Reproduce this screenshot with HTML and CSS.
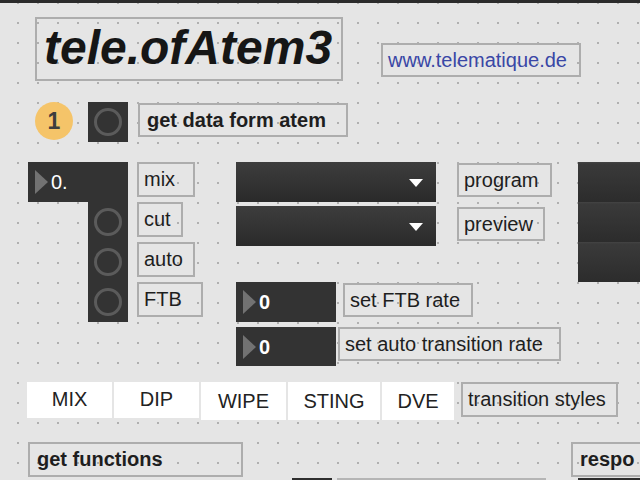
FILE: index.html
```html
<!DOCTYPE html>
<html lang="en">
<head>
  <meta charset="UTF-8">
  <title>tele.ofAtem3</title>
  <link rel="stylesheet" href="styles.css">
</head>
<body>
  <div class="topbar"></div>
  <div class="patch">
    <div class="row head">
      <div class="title">tele.ofAtem3</div>
      <div class="box url">www.telematique.de</div>
    </div>

    <div class="row start">
      <div class="step">1</div>
      <div class="bang"><span class="ring"></span></div>
      <div class="box bold getdata">get data form atem</div>
    </div>

    <div class="row controls">
      <div class="mixer">
        <div class="num wide"><span class="tri"></span>0.</div>
        <div class="bangs">
          <div class="bang"><span class="ring"></span></div>
          <div class="bang"><span class="ring"></span></div>
          <div class="bang"><span class="ring"></span></div>
        </div>
      </div>
      <div class="labels">
        <div class="box w58">mix</div>
        <div class="box w46">cut</div>
        <div class="box w58">auto</div>
        <div class="box w66">FTB</div>
      </div>
      <div class="routing">
        <div class="line">
          <div class="menu"><span class="arrow"></span></div>
          <div class="box tag w95">program</div>
        </div>
        <div class="line second">
          <div class="menu"><span class="arrow"></span></div>
          <div class="box tag w88">preview</div>
        </div>
        <div class="line rate">
          <div class="num"><span class="tri"></span><b>0</b></div>
          <div class="box ratelabel w130">set FTB rate</div>
        </div>
        <div class="line rate2">
          <div class="num short"><span class="tri"></span><b>0</b></div>
          <div class="box ratelabel near w223">set auto transition rate</div>
        </div>
      </div>
      <div class="side">
        <div class="seg"></div>
        <div class="seg"></div>
        <div class="seg"></div>
      </div>
    </div>

    <div class="row styles">
      <div class="tab">MIX</div>
      <div class="tab">DIP</div>
      <div class="tab low">WIPE</div>
      <div class="tab low sting">STING</div>
      <div class="tab low dve">DVE</div>
      <div class="box styleslabel">transition styles</div>
    </div>

    <div class="row funcs">
      <div class="box bold getfuncs">get functions</div>
      <div class="box bold respo">respo</div>
    </div>

    <div class="row tail">
      <div class="darkbit"></div>
      <div class="greybit"></div>
      <div class="darkbit wide"></div>
    </div>
  </div>
</body>
</html>
```

FILE: styles.css
```css
body {
  margin: 0;
  width: 640px;
  height: 480px;
  overflow: hidden;
  font-family: 'Liberation Sans', Arial, sans-serif;
  font-size: 20px;
  color: #1e1e1e;
  background-color: #e5e5e5;
  background-image: radial-gradient(circle, #b0b0b0 0.9px, rgba(0,0,0,0) 1.4px);
  background-size: 20px 20px;
  background-position: 8px -7px;
}
.topbar {
  height: 3px;
  background: #2b2b2b;
}
.patch {
  padding-left: 28px;
}
.row {
  display: flex;
  align-items: flex-start;
}
.box {
  box-sizing: border-box;
  height: 35px;
  border: 2px solid #adadad;
  padding-left: 5px;
  line-height: 30px;
  white-space: nowrap;
  overflow: hidden;
  flex-shrink: 0;
}
.bold {
  font-weight: bold;
}

/* header */
.head {
  margin-top: 14px;
}
.title {
  box-sizing: border-box;
  margin-left: 7px;
  width: 308px;
  height: 64px;
  border: 2px solid #adadad;
  padding-left: 7px;
  font-size: 48px;
  line-height: 58px;
  font-weight: bold;
  font-style: italic;
  color: #161616;
}
.url {
  margin-left: 38px;
  margin-top: 26px;
  width: 200px;
  height: 34px;
  color: #3947a6;
}

/* start row */
.start {
  margin-top: 21px;
}
.step {
  margin-left: 7px;
  width: 38px;
  height: 38px;
  border-radius: 50%;
  background: #f5c469;
  color: #3e3e3e;
  font-weight: bold;
  font-size: 23px;
  line-height: 39px;
  text-align: center;
}
.start .bang {
  margin-left: 15px;
}
.getdata {
  margin-left: 10px;
  margin-top: 1px;
  width: 210px;
  height: 34px;
  padding-left: 7px;
}
.bang {
  width: 40px;
  height: 40px;
  background: #333;
  display: flex;
  align-items: center;
  justify-content: center;
}
.ring {
  box-sizing: border-box;
  width: 28px;
  height: 28px;
  border: 3px solid #5b5b5b;
  border-radius: 50%;
}

/* controls */
.controls {
  margin-top: 20px;
}
.mixer {
  width: 100px;
  flex-shrink: 0;
}
.num {
  box-sizing: border-box;
  width: 100px;
  height: 40px;
  background: #333;
  color: #fff;
  display: flex;
  align-items: center;
  padding-left: 7px;
  line-height: 40px;
}
.num.short {
  height: 39px;
}
.tri {
  width: 0;
  height: 0;
  border-left: 13px solid #727272;
  border-top: 12px solid transparent;
  border-bottom: 12px solid transparent;
  margin-right: 3px;
}
.bangs {
  margin-left: 60px;
}
.labels {
  margin-left: 9px;
  width: 66px;
  display: flex;
  flex-direction: column;
  gap: 5px;
  flex-shrink: 0;
}
.w46 { width: 46px; }
.w58 { width: 58px; }
.w66 { width: 66px; }
.w88 { width: 88px; }
.w95 { width: 95px; }
.w130 { width: 130px; }
.w223 { width: 223px; }

.routing {
  margin-left: 33px;
  width: 325px;
  flex-shrink: 0;
}
.line {
  display: flex;
  align-items: flex-start;
}
.line.second {
  margin-top: 4px;
}
.line.rate {
  margin-top: 36px;
}
.line.rate2 {
  margin-top: 5px;
}
.menu {
  position: relative;
  width: 200px;
  height: 40px;
  background: linear-gradient(#3d3d3d, #2a2a2a);
  flex-shrink: 0;
}
.arrow {
  position: absolute;
  right: 13px;
  top: 17px;
  width: 0;
  height: 0;
  border-top: 8px solid #fff;
  border-left: 7px solid transparent;
  border-right: 7px solid transparent;
}
.tag {
  margin-left: 21px;
  margin-top: 1px;
  height: 34px;
}
.ratelabel {
  margin-left: 7px;
  margin-top: 1px;
  height: 34px;
}
.ratelabel.near {
  margin-left: 2px;
  margin-top: 0;
}
.side {
  margin-left: 17px;
  width: 80px;
  flex-shrink: 0;
}
.seg {
  height: 40px;
  background: linear-gradient(#444 0, #3a3a3a 2px, #2c2c2c 100%);
}

/* transition styles */
.styles {
  margin-top: 16px;
  margin-left: -1px;
}
.tab {
  box-sizing: border-box;
  width: 85px;
  height: 36px;
  margin-right: 2px;
  background: #fff;
  text-align: center;
  line-height: 34px;
  color: #222;
  flex-shrink: 0;
}
.tab.low {
  height: 38px;
  line-height: 38px;
}
.tab.sting {
  width: 92px;
}
.tab.dve {
  width: 72px;
}
.styleslabel {
  margin-left: 5px;
  width: 157px;
}

/* bottom */
.funcs {
  margin-top: 22px;
}
.getfuncs {
  width: 215px;
  padding-left: 7px;
}
.respo {
  margin-left: 328px;
  width: 120px;
  padding-left: 7px;
}
.tail {
  margin-top: 1px;
}
.darkbit {
  margin-left: 264px;
  width: 40px;
  height: 10px;
  background: #2e2e2e;
  flex-shrink: 0;
}
.greybit {
  margin-left: 5px;
  width: 209px;
  height: 10px;
  border-top: 2px solid #b5b5b5;
  background: #dedede;
  flex-shrink: 0;
}
.darkbit.wide {
  margin-left: 32px;
  width: 80px;
}
```
